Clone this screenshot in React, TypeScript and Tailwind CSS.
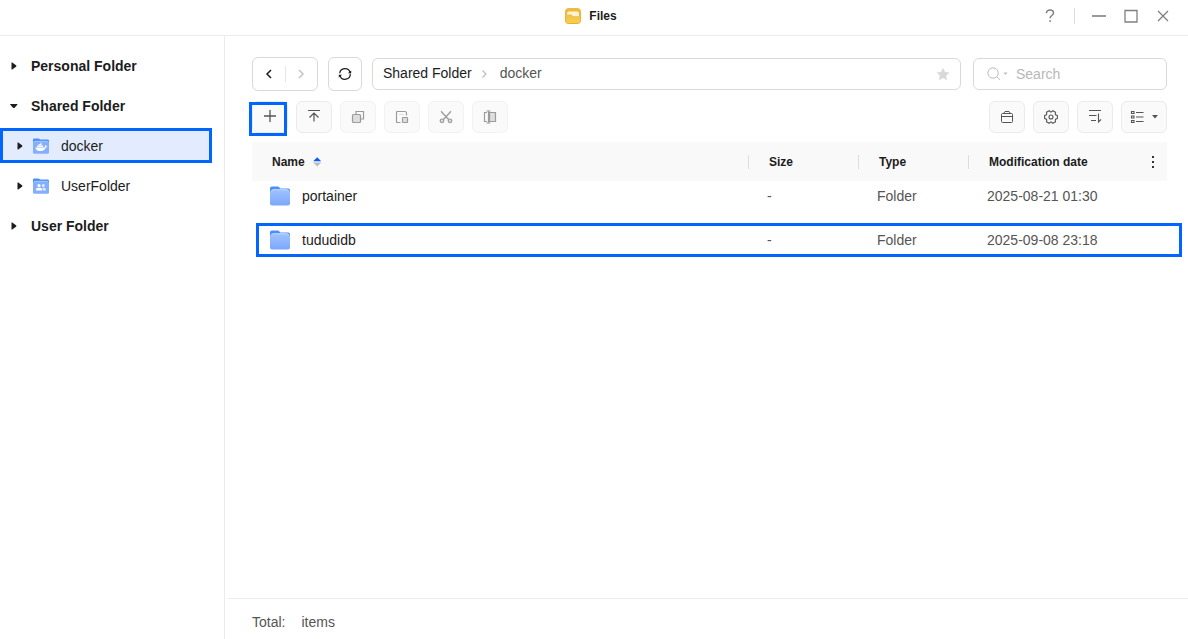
import type { ReactNode } from "react";

const Caret = ({ open = false }: { open?: boolean }) => (
  <svg width="16" height="16" viewBox="0 0 16 16" className="shrink-0" fill="#1c1c1c">
    {open ? <path d="M4.300 6h7v.8L8.400 10H7.200L4.300 6.800z" /> : <path d="M5.500 4.500h.8l4 3.100v.8l-4 3.100h-.8z" />}
  </svg>
);

const FolderShape = () => (
  <svg width="20" height="20" viewBox="0 0 20 20" className="shrink-0">
    <defs>
      <linearGradient id="folderFront" x1="0" y1="0" x2="0" y2="1">
        <stop offset="0" stopColor="#a0c2ff" />
        <stop offset="1" stopColor="#7ba8fd" />
      </linearGradient>
    </defs>
    <path d="M0 2.400Q0 .6 1.800.6h5.600c1 0 1.500.4 2 1l.8 1h8q1.800 0 1.800 1.800V12H0z" fill="#4a90fb" />
    <path d="M0 6.500Q.6 3.400 2.800 3.400h14.400q2.200 0 2.800 3.100v11.100q0 2-2 2H2q-2 0-2-2z" fill="url(#folderFront)" />
    <path d="M1.600 5.200Q2 3.700 3.400 3.700h13.200q1.400 0 1.800 1.500" fill="none" stroke="#d3e3ff" strokeWidth=".8" />
  </svg>
);

const SharedIcon = ({ children }: { children: ReactNode }) => (
  <svg width="16" height="16" viewBox="0 0 16 16" className="shrink-0">
    <path d="M0 1.600Q0 .4 1.200.4h4.400l1.600 1.200h7.400Q16 1.600 16 3v7H0z" fill="#4a90fb" />
    <path d="M0 4.500Q.4 3 2 3h12q1.600 0 2 1.500v9.700q0 1.600-1.600 1.600H1.600Q0 15.800 0 14.200z" fill="#85affd" />
    <path d="M.8 4.200Q1.200 3.300 2.200 3.300h11.600q1 0 1.400.9" fill="none" stroke="#b5d0ff" strokeWidth=".7" />
    {children}
  </svg>
);

const DockerFolder = () => (
  <SharedIcon>
    <path
      fill="#fff"
      d="M2.400 9.400h8.800c.7 0 .9-.3.8-1-.1-.5.1-1 .5-1.300.4.300.6.7.7 1.200.5-.1.900 0 1.200.2-.3.7-.8 1-1.600 1-.7 2.300-2.300 3.500-5 3.500-3.200 0-5.100-1.200-5.400-3.600z"
    />
    <path fill="#fff" opacity=".9" d="M4 7.500h6.200V9H4zM5.600 6h3v1.200h-3zM7.200 4.700h1.400v1H7.200z" />
  </SharedIcon>
);

const UsersFolder = () => (
  <SharedIcon>
    <g fill="#fff">
      <circle cx="6" cy="7.500" r="1.600" />
      <path d="M3 12.500V11.400q0-1.600 1.700-1.600h2.600q1.700 0 1.700 1.600v1.100z" />
      <circle cx="10.300" cy="7.500" r="1.500" opacity=".75" />
      <path d="M9.600 9.800h1.400q1.900 0 1.900 1.600v1.100H9.700z" opacity=".75" />
    </g>
  </SharedIcon>
);

const Icon = ({ children, className = "" }: { children: ReactNode; className?: string }) => (
  <svg width="16" height="16" viewBox="0 0 16 16" fill="none" stroke="currentColor" className={`shrink-0 ${className}`}>
    {children}
  </svg>
);

// six-toothed cog, [angle offset, radius] for each corner of a tooth
const cogPoints = [0, 60, 120, 180, 240, 300]
  .flatMap((tooth) =>
    [
      [-24, 5.2],
      [-14, 6.6],
      [14, 6.6],
      [24, 5.2],
    ].map(([offset, radius]) => {
      const angle = ((tooth + offset) * Math.PI) / 180;
      return `${(8 + radius * Math.cos(angle)).toFixed(2)},${(8 + radius * Math.sin(angle)).toFixed(2)}`;
    }),
  )
  .join(" ");

const ToolButton = ({ label, disabled = false, children }: { label: string; disabled?: boolean; children: ReactNode }) => (
  <button
    type="button"
    aria-label={label}
    disabled={disabled}
    className={`flex h-8 w-9 items-center justify-center rounded-md border bg-[#fafafa] ${
      disabled ? "border-[#f2f2f2] text-[#9b9b9b]" : "border-[#ebebeb] text-[#555555]"
    }`}
  >
    {children}
  </button>
);

const TreeRoot = ({ label, open }: { label: string; open?: boolean }) => (
  <button type="button" aria-expanded={!!open} className="flex h-10 w-full items-center gap-[9px] pl-1.5 font-bold">
    <Caret open={open} />
    {label}
  </button>
);

const TreeItem = ({ label, icon, selected }: { label: string; icon: ReactNode; selected?: boolean }) => (
  <div className="h-10 pr-3 pt-0.5">
    <button
      type="button"
      className={`flex h-[35px] w-full items-center ${selected ? "border-3 border-[#0066ff] bg-[#e3ecff] pl-[9px]" : "pl-3"}`}
    >
      <Caret />
      <span className="ml-[5px] mr-3">{icon}</span>
      {label}
    </button>
  </div>
);

const rows = [
  { name: "portainer", size: "-", type: "Folder", date: "2025-08-21 01:30", marked: false },
  { name: "tududidb", size: "-", type: "Folder", date: "2025-09-08 23:18", marked: true },
];

const TitleBar = () => (
  <header className="grid h-9 grid-cols-[1fr_auto_1fr] items-center border-b border-[#ebebeb]">
    <div />
    <div className="flex items-center gap-2 pr-1.5 pb-1">
      <svg width="16" height="16" viewBox="0 0 16 16">
        <defs>
          <linearGradient id="filesLogo" x1="0" y1="0" x2="0" y2="1">
            <stop offset="0" stopColor="#f0bb45" />
            <stop offset="1" stopColor="#e8b02c" />
          </linearGradient>
          <linearGradient id="filesPocket" x1="0" y1="0" x2="0" y2="1">
            <stop offset="0" stopColor="#f0c04a" />
            <stop offset="1" stopColor="#f6cf52" />
          </linearGradient>
        </defs>
        <rect width="16" height="16" rx="4" fill="url(#filesLogo)" />
        <path d="M2 5.500Q2 3.500 4 3.500h8q2 0 2 2v3H8.200L6.600 7H2z" fill="#fff3d6" />
        <path d="M1 6.600h5.400L8 8.200h7v4.300q0 2.500-2.500 2.500h-9Q1 15 1 12.500z" fill="url(#filesPocket)" />
      </svg>
      <h1 className="text-xs font-bold">Files</h1>
    </div>
    <div className="flex items-center justify-end pr-[9px] pb-1 text-[#808080]">
      <button type="button" aria-label="Help" className="flex w-8 justify-center">
        <Icon>
          <path d="M4.500 5.200c0-2.200 1.400-3.200 3.500-3.200s3.500 1.100 3.500 2.900c0 2.600-3.400 2.600-3.400 5.300M8.100 12.200v1.700" strokeWidth="1.500" />
        </Icon>
      </button>
      <span className="mx-2 h-4 w-px bg-[#dcdcdc]" />
      <button type="button" aria-label="Minimize" className="flex w-8 justify-center">
        <Icon>
          <path d="M1 8h14" strokeWidth="1.600" />
        </Icon>
      </button>
      <button type="button" aria-label="Maximize" className="flex w-8 justify-center">
        <Icon>
          <path d="M2 2.500h12v11.500H2zM1.500 2.500h13" strokeWidth="1.300" />
        </Icon>
      </button>
      <button type="button" aria-label="Close" className="flex w-8 justify-center">
        <Icon>
          <path d="M3 3l10 10M13 3L3 13" strokeWidth="1.300" />
        </Icon>
      </button>
    </div>
  </header>
);

const Sidebar = () => (
  <nav className="w-[225px] shrink-0 border-r border-[#ebebeb] pt-2.5">
    <TreeRoot label="Personal Folder" />
    <TreeRoot label="Shared Folder" open />
    <TreeItem label="docker" icon={<DockerFolder />} selected />
    <TreeItem label="UserFolder" icon={<UsersFolder />} />
    <TreeRoot label="User Folder" />
  </nav>
);

const LocationBar = () => (
  <div className="flex items-center">
    <div className="flex h-[34px] w-[66px] items-center rounded-md border border-[#d9d9d9]">
      <button type="button" aria-label="Back" className="flex flex-1 justify-center text-[#1c1c1c]">
        <Icon>
          <path d="M10 4L6 8l4 4" strokeWidth="1.500" />
        </Icon>
      </button>
      <span className="h-4 w-px bg-[#e4e4e4]" />
      <button type="button" aria-label="Forward" disabled className="flex flex-1 justify-center text-[#c4c4c4]">
        <Icon>
          <path d="M6 4l4 4-4 4" strokeWidth="1.500" />
        </Icon>
      </button>
    </div>
    <button
      type="button"
      aria-label="Refresh"
      className="ml-2.5 flex h-[34px] w-[34px] items-center justify-center rounded-md border border-[#d9d9d9] text-[#1c1c1c]"
    >
      <Icon>
        <path d="M2.700 7.300A5.300 5.300 0 0 1 13 6.300M13.300 7.700A5.300 5.300 0 0 1 3 9.700" strokeWidth="1.200" />
        <path d="M14.200 4.500v2.700h-3.400zM1.800 11.500V8.800h3.400z" fill="currentColor" stroke="none" />
      </Icon>
    </button>
    <div className="ml-2.5 flex h-8 flex-1 items-center rounded-md border border-[#d9d9d9] px-2.5">
      <a href="#shared" className="pb-0.5">
        Shared Folder
      </a>
      <Icon className="mx-1.5 text-[#c4bbb2]">
        <path d="M4.500 4.500L8 8l-3.500 3.500" strokeWidth="1.200" />
      </Icon>
      <a href="#docker" className="pb-0.5 text-[#555555]">
        docker
      </a>
      <button type="button" aria-label="Favorite" className="ml-auto text-[#d9d9d9]">
        <svg width="14" height="14" viewBox="0 0 14 14" fill="currentColor">
          <path d="M7 .7l2 4.200 4.500.6-3.300 3.200.8 4.600L7 11.100l-4 2.200.8-4.600L.5 5.500 5 4.900z" />
        </svg>
      </button>
    </div>
    <label className="ml-3 flex h-8 w-[194px] items-center rounded-md border border-[#d9d9d9] pl-3">
      <svg width="22" height="16" viewBox="0 0 22 16" fill="none" stroke="#bdbdbd" className="mr-2 shrink-0">
        <circle cx="7" cy="7" r="5.200" />
        <path d="M10.800 10.800l3.200 3" />
        <path d="M17.500 6.500h4L19.500 9z" fill="#bdbdbd" stroke="none" />
      </svg>
      <input
        type="text"
        aria-label="Search"
        placeholder="Search"
        className="w-full min-w-0 bg-transparent outline-none placeholder:text-[#b8b8b8]"
      />
    </label>
  </div>
);

const Toolbar = () => (
  <div className="mt-2.5 flex gap-2">
    <div className="relative">
      <ToolButton label="New">
        <Icon className="mb-0.5">
          <path d="M8 2v12M2 8h12" strokeWidth="1.300" />
        </Icon>
      </ToolButton>
      {/* Highlight frame */}
      <span className="pointer-events-none absolute -left-[3px] top-px h-[34px] w-[38px] border-3 border-[#0066ff]" />
    </div>
    <ToolButton label="Upload">
      <Icon className="mb-0.5">
        <path d="M2 2.500h12M8 13.500V5.500M3.500 9.500L8 5l4.500 4.500" strokeWidth="1.200" />
      </Icon>
    </ToolButton>
    <ToolButton label="Copy" disabled>
      <Icon>
        <path d="M6 5.500V2.500h7.500v7.500H11" strokeWidth="1.200" />
        <rect x="2.500" y="5.500" width="8" height="8" rx="1" fill="#dedede" strokeWidth="1.200" />
      </Icon>
    </ToolButton>
    <ToolButton label="Paste" disabled>
      <Icon>
        <path d="M6.500 13.500h-3q-1 0-1-1v-9q0-1 1-1h7.500q1.500 0 1.500 1.500v2.500" strokeWidth="1.200" />
        <path d="M5 5.500h5" stroke="#dedede" />
        <rect x="8.500" y="8.500" width="5" height="5" rx=".5" fill="#dedede" strokeWidth="1.200" />
      </Icon>
    </ToolButton>
    <ToolButton label="Cut" disabled>
      <Icon>
        <path d="M3 2.200l7.600 8.300M13 2.200L5.400 10.500" strokeWidth="1.300" />
        <circle cx="4" cy="11.800" r="1.800" fill="#dedede" strokeWidth="1.200" />
        <circle cx="12" cy="11.800" r="1.800" fill="#dedede" strokeWidth="1.200" />
      </Icon>
    </ToolButton>
    <ToolButton label="Rename" disabled>
      <Icon>
        <path d="M7.500 3.500h6v9h-6z" fill="#dedede" strokeWidth="1.200" />
        <path d="M5 3.500H2.500v9H5M4.500 2h4M4.500 14h4M6.500 2v12" strokeWidth="1.200" />
      </Icon>
    </ToolButton>
    <div className="ml-auto flex gap-2">
      <ToolButton label="Toolbox">
        <Icon>
          <rect x="2.500" y="4.500" width="11" height="9" rx="1" />
          <path d="M4.500 4.500L6 2.500h4l1.500 2M2.500 7.500h11" />
        </Icon>
      </ToolButton>
      <ToolButton label="Settings">
        <Icon>
          <polygon points={cogPoints} strokeLinejoin="round" strokeWidth="1.100" />
          <circle cx="8" cy="8" r="2" strokeWidth="1.100" />
        </Icon>
      </ToolButton>
      <ToolButton label="Sort">
        <Icon>
          <path d="M2 1.500h12M2 6.500h7.500M4 11.500h5M11.500 4.500v8.500l2.500-2.500" strokeWidth="1.100" />
        </Icon>
      </ToolButton>
      <button
        type="button"
        aria-label="View"
        className="flex h-8 w-[46px] items-center gap-1.5 rounded-md border border-[#ebebeb] bg-[#fafafa] pl-2 text-[#555555]"
      >
        <Icon>
          <path d="M1.500 2.500h2.500v2h-2.500zM1.500 7h2.500v2h-2.500zM1.500 11.500h2.500v2h-2.500zM6 3.500h7.500M6 8h7.500M6 12.500h7.500" strokeWidth="1.100" />
        </Icon>
        <svg width="6" height="4" viewBox="0 0 6 4" fill="currentColor">
          <path d="M0 0h6L3 3.500z" />
        </svg>
      </button>
    </div>
  </div>
);

const HeadCell = ({ children }: { children: ReactNode }) => (
  <th scope="col" className="p-0 text-left">
    <div className="flex h-3.5 items-center border-l border-[#dedede] pl-5">{children}</div>
  </th>
);

const FileTable = () => (
  <table className="mt-[9px] w-full table-fixed border-collapse">
    <colgroup>
      <col />
      <col className="w-[110px]" />
      <col className="w-[110px]" />
      <col className="w-[199px]" />
    </colgroup>
    <thead>
      <tr className="h-[39px] bg-[#f9f9f9] text-xs font-bold">
        <th scope="col" className="py-0 pl-5 text-left">
          <div className="flex items-center gap-2">
            Name
            <svg width="9" height="10" viewBox="0 0 9 10">
              <path d="M4.200.3L8.200 4.200h-8z" fill="#0a5cff" />
              <path d="M.2 5.600h8l-4 3.900z" fill="#b9bcc6" />
            </svg>
          </div>
        </th>
        <HeadCell>Size</HeadCell>
        <HeadCell>Type</HeadCell>
        <HeadCell>
          Modification date
          <button type="button" aria-label="Columns" className="ml-auto mr-1.5">
            <svg width="16" height="16" viewBox="0 0 16 16" fill="#333333">
              <path d="M7 2h2v2H7zM7 7h2v2H7zM7 12h2v2H7z" />
            </svg>
          </button>
        </HeadCell>
      </tr>
    </thead>
    <tbody>
      {rows.map((row) => (
        <tr key={row.name} className="relative h-11 align-top text-[#555555]">
          <td className="pl-[18px] pt-[5px] text-[#1c1c1c]">
            <div className="flex items-center gap-3">
              <FolderShape />
              {row.name}
            </div>
            {row.marked && (
              <span className="pointer-events-none absolute -right-[15px] -top-0.5 left-1 h-[34px] border-3 border-[#0066ff]" />
            )}
          </td>
          <td className="pl-[19px] pt-[5px]">{row.size}</td>
          <td className="pl-[19px] pt-[5px]">{row.type}</td>
          <td className="pl-[19px] pt-[5px]">{row.date}</td>
        </tr>
      ))}
    </tbody>
  </table>
);

const App = () => {
  return (
    <div className="flex min-h-screen flex-col overflow-x-hidden bg-white font-['Liberation_Sans',Arial,sans-serif] text-sm text-[#1c1c1c]">
      <TitleBar />
      <div className="flex flex-1">
        <Sidebar />
        <main className="flex min-w-0 flex-1 flex-col">
          <div className="flex-1 pl-[27px] pr-[21px] pt-[21px]">
            <LocationBar />
            <Toolbar />
            <FileTable />
          </div>
          <footer className="ml-[3px] flex h-[41px] gap-4 border-t border-[#ebebeb] pl-6 pt-[13px] text-[#555555]">
            <span>Total:</span>
            <span>items</span>
          </footer>
        </main>
      </div>
    </div>
  );
};

export default App;
